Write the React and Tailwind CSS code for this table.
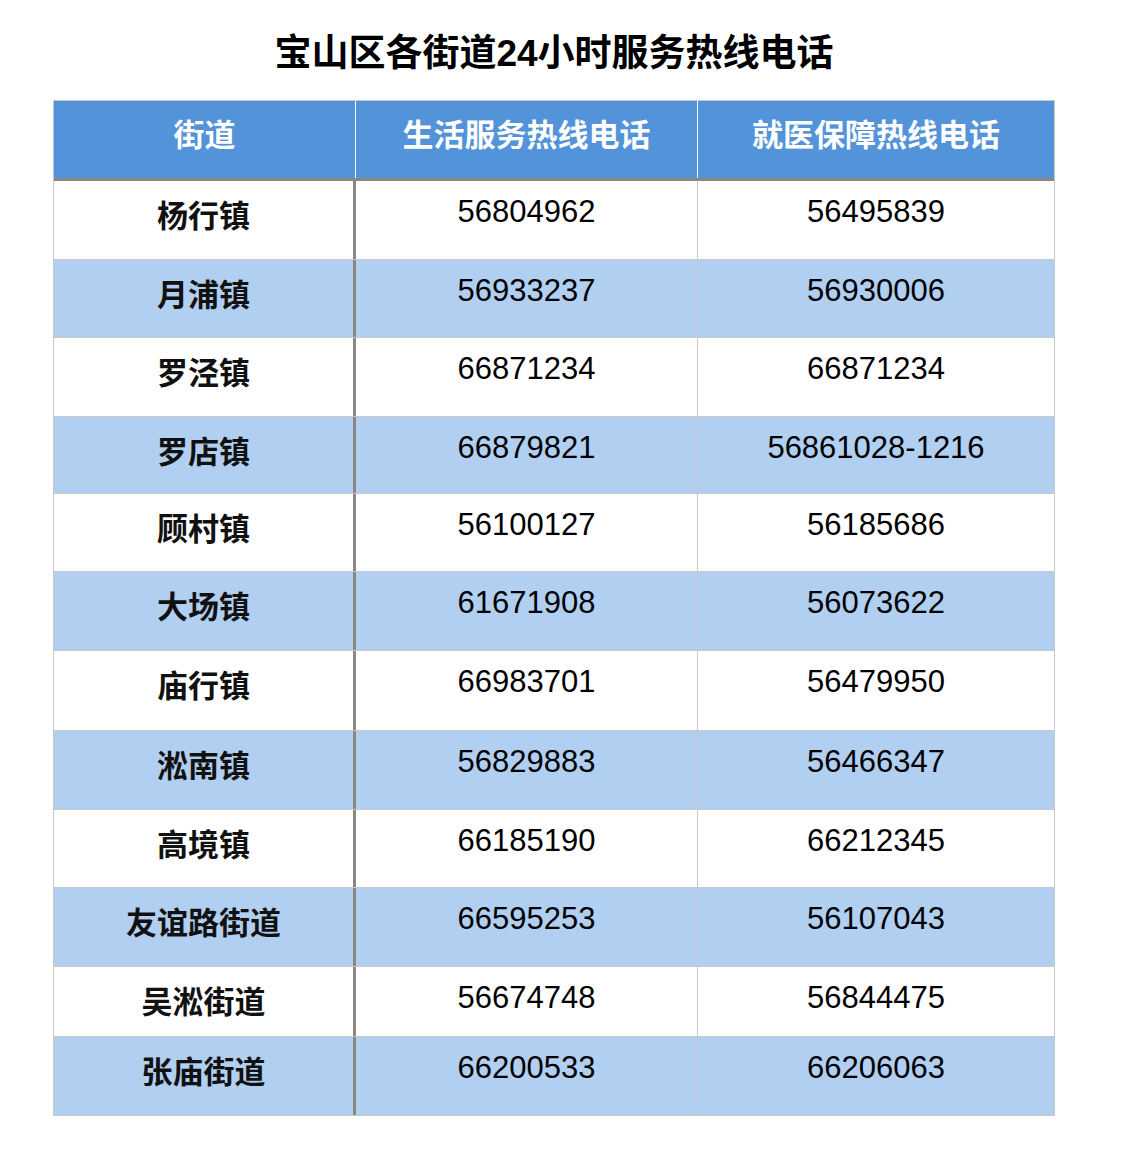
const rows = [
  { name: '杨行镇', life: '56804962', med: '56495839', h: 'h-[79px]', bg: 'bg-white' },
  { name: '月浦镇', life: '56933237', med: '56930006', h: 'h-[78px]', bg: 'bg-[#b1cff1]' },
  { name: '罗泾镇', life: '66871234', med: '66871234', h: 'h-[79px]', bg: 'bg-white' },
  { name: '罗店镇', life: '66879821', med: '56861028-1216', h: 'h-[77px]', bg: 'bg-[#b1cff1]' },
  { name: '顾村镇', life: '56100127', med: '56185686', h: 'h-[78px]', bg: 'bg-white' },
  { name: '大场镇', life: '61671908', med: '56073622', h: 'h-[79px]', bg: 'bg-[#b1cff1]' },
  { name: '庙行镇', life: '66983701', med: '56479950', h: 'h-[80px]', bg: 'bg-white' },
  { name: '淞南镇', life: '56829883', med: '56466347', h: 'h-[79px]', bg: 'bg-[#b1cff1]' },
  { name: '高境镇', life: '66185190', med: '66212345', h: 'h-[78px]', bg: 'bg-white' },
  { name: '友谊路街道', life: '66595253', med: '56107043', h: 'h-[79px]', bg: 'bg-[#b1cff1]' },
  { name: '吴淞街道', life: '56674748', med: '56844475', h: 'h-[70px]', bg: 'bg-white' },
  { name: '张庙街道', life: '66200533', med: '66206063', h: 'h-[78px]', bg: 'bg-[#b1cff1]' },
];

const cjk = "font-['Liberation_Sans','Noto_Sans_CJK_SC',sans-serif]";

export default function App() {
  return (
    <div className={`bg-white min-h-[1164px] w-[1136px] ${cjk}`}>
      <h1 className="pt-[35px] h-[100px] pl-[53px] w-[1055px] text-center text-[37px] leading-[37px] font-bold text-black">
        宝山区各街道24小时服务热线电话
      </h1>

      <div className="ml-[53px] w-[1002px] border border-[#c8c8c8]">
        {/* header */}
        <div className="grid grid-cols-[302px_342px_356px] h-[80px] bg-[#5393d9] border-b-[3px] border-[#8a8681] text-white font-bold text-[31px] leading-[31px]">
          <div className="pt-[19px] text-center border-r border-white">街道</div>
          <div className="pt-[19px] text-center border-r border-white">生活服务热线电话</div>
          <div className="pt-[19px] text-center">就医保障热线电话</div>
        </div>

        {rows.map((r, i) => (
          <div
            key={r.name}
            className={`grid grid-cols-[302px_342px_356px] ${r.h} ${r.bg} ${i < rows.length - 1 ? 'border-b border-[#c8c8c8]' : ''}`}
          >
            <div className="pt-[20px] text-center font-bold text-[31px] leading-[31px] text-[#111] border-r-[3px] border-[#8a8681]">
              {r.name}
            </div>
            <div className="pt-[15px] text-center text-[31px] leading-[31px] text-black border-r border-[#c8c8c8]">
              {r.life}
            </div>
            <div className="pt-[15px] text-center text-[31px] leading-[31px] text-black">
              {r.med}
            </div>
          </div>
        ))}
      </div>
    </div>
  );
}
